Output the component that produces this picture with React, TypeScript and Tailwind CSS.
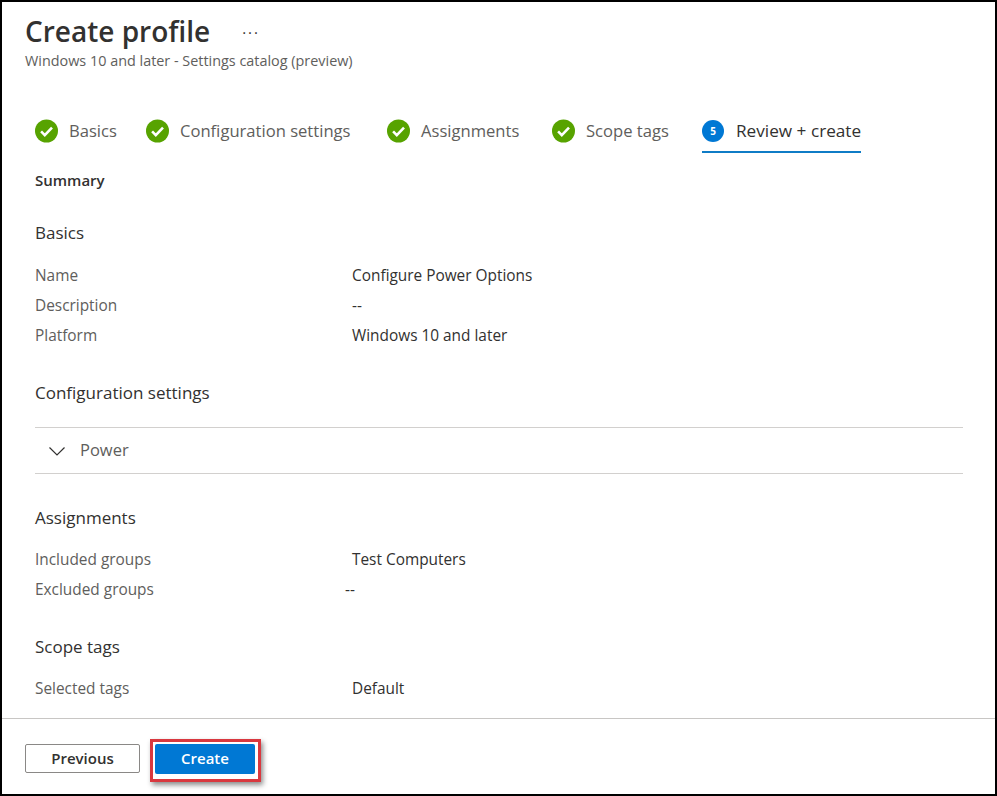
import React from "react";

function Check() {
  return (
    <svg width="24" height="24" viewBox="0 0 24 24" className="shrink-0">
      <circle cx="11.5" cy="12" r="11.5" fill="#57a300" />
      <path d="M6.1 12.4l3.7 3.7 7.2-7.4" fill="none" stroke="#fff" strokeWidth="2.6" />
    </svg>
  );
}

function Row({ label, value, valueClass = "pl-[317px]" }: { label: string; value: string; valueClass?: string }) {
  return (
    <div className="flex h-[30px] items-center text-[15.4px] text-[#605e5c]">
      <span className="w-0 whitespace-nowrap">{label}</span>
      <span className={`${valueClass} whitespace-nowrap text-[#323130]`}>{value}</span>
    </div>
  );
}

function Step({ label, className }: { label: string; className: string }) {
  return (
    <div className={`flex items-center gap-[10px] ${className}`}>
      <Check />
      <span className="whitespace-nowrap text-[16.6px] text-[#605e5c]">{label}</span>
    </div>
  );
}

function Heading({ children, className }: { children: React.ReactNode; className: string }) {
  return <div className={`text-[17px] font-medium leading-[24px] text-[#323130] ${className}`}>{children}</div>;
}

export default function App() {
  return (
    <div className="flex h-[796px] w-[997px] flex-col border-2 border-black bg-white font-['Open_Sans','Noto_Sans',sans-serif]">
      <header className="pl-[23px] pt-[9px]">
        <div className="flex items-center">
          <h1 className="text-[28px] font-semibold leading-[40px] text-[#323130]">Create profile</h1>
          <span className="ml-[32px] mt-[1px] text-[15px] leading-[20px] tracking-[2px] text-[#323130]">···</span>
        </div>
        <p className="text-[14.4px] leading-[20px] text-[#605e5c]">Windows 10 and later - Settings catalog (preview)</p>
      </header>

      <nav className="ml-[33px] mt-[48px] flex h-[34px] items-start">
        <Step label="Basics" className="w-[111px]" />
        <Step label="Configuration settings" className="w-[241px]" />
        <Step label="Assignments" className="w-[165px]" />
        <Step label="Scope tags" className="w-[150px]" />
        <div className="flex h-[34px] items-start gap-[12px] border-b-2 border-[#0f7cc6]">
          <span className="mt-[1px] flex h-[22px] w-[22px] items-center justify-center rounded-full bg-[#0078d4] text-[10px] font-bold text-white">5</span>
          <span className="text-[17.2px] font-medium leading-[24px] text-[#323130]">Review + create</span>
        </div>
      </nav>

      <main className="flex-1 pl-[33px] pr-[32px]">
        <div className="mt-[15px] text-[15px] font-semibold leading-[24px] text-[#323130]">Summary</div>

        <Heading className="mt-[29px]">Basics</Heading>
        <div className="mt-[16px]">
          <Row label="Name" value="Configure Power Options" />
          <Row label="Description" value="--" />
          <Row label="Platform" value="Windows 10 and later" />
        </div>

        <Heading className="mt-[30px]">Configuration settings</Heading>
        <div className="mt-[22px] flex h-[47px] items-center border-y border-[#d2d0ce] pl-[14px]">
          <svg width="16" height="16" viewBox="0 0 16 16" className="shrink-0">
            <path d="M0.5 4.5L8 12l7.5-7.5" fill="none" stroke="#323130" strokeWidth="1.2" />
          </svg>
          <span className="ml-[15px] text-[16.5px] text-[#605e5c]">Power</span>
        </div>

        <Heading className="mt-[32px]">Assignments</Heading>
        <div className="mt-[15px]">
          <Row label="Included groups" value="Test Computers" />
          <Row label="Excluded groups" value="--" valueClass="pl-[310px]" />
        </div>

        <Heading className="mt-[30px]">Scope tags</Heading>
        <div className="mt-[15px]">
          <Row label="Selected tags" value="Default" />
        </div>
      </main>

      <footer className="flex h-[76px] items-start border-t border-[#c8c6c4] pl-[23px] pt-[25px]">
        <button className="h-[29px] w-[115px] rounded-[2px] border border-[#8a8886] bg-white pb-[1px] text-[15px] font-semibold text-[#323130]">
          Previous
        </button>
        <div className="-mt-[5px] ml-[10px] border-[3px] border-[#d9383f] pb-[5px] pl-[2px] pr-[3px] pt-[2px] shadow-[2px_3px_5px_rgba(0,0,0,0.45)]">
          <button className="block h-[30px] w-[100px] rounded-[2px] bg-[#0078d4] pb-[2px] text-[15px] font-semibold text-white">
            Create
          </button>
        </div>
      </footer>
    </div>
  );
}
